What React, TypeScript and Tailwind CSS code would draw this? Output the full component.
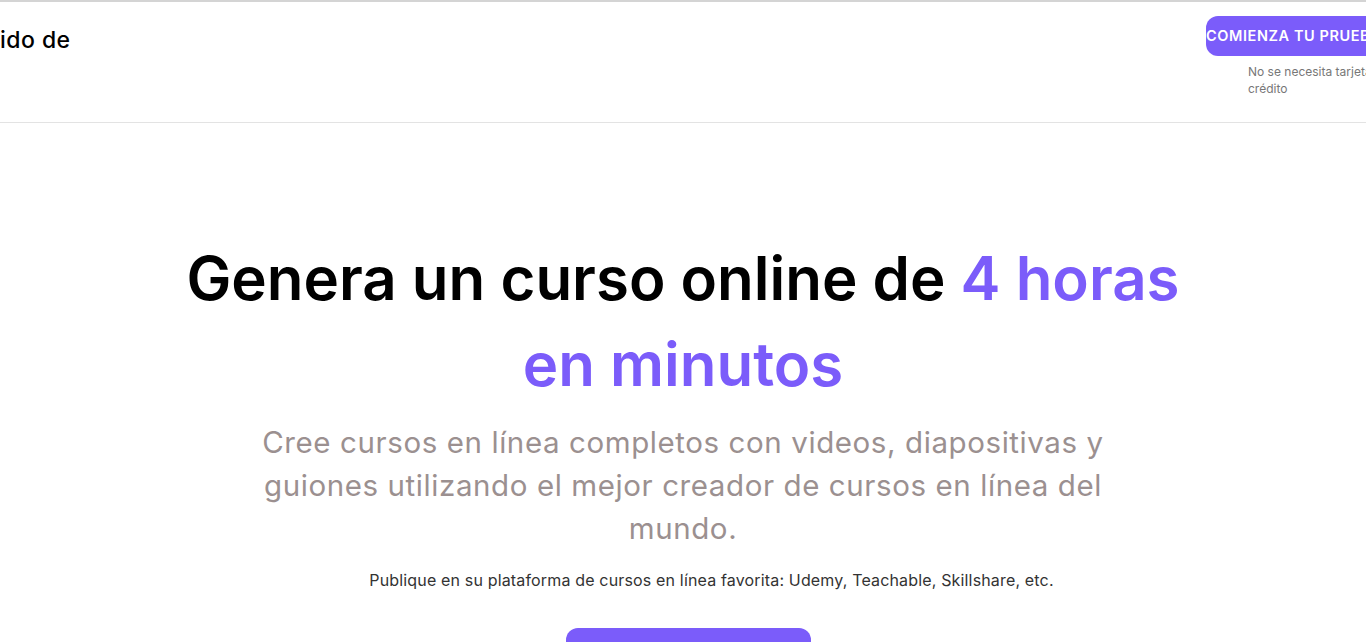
export default function App() {
  return (
    <div
      className="min-h-screen bg-white overflow-hidden"
      style={{ fontFamily: "Inter, 'Noto Sans', sans-serif" }}
    >
      {/* Header */}
      <header className="h-[123px] border-t-2 border-b border-t-[#d4d4d4] border-b-[#e3e3e3] flex justify-between overflow-hidden">
        <div className="pt-[21px] text-[23px] font-medium text-black tracking-[0.02em]">
          ido de
        </div>
        <div className="shrink-0 w-[200px] -mr-[40px] pt-[14px]">
          <a
            href="#"
            className="flex items-center h-[40px] rounded-xl bg-[#7b5cfa] text-white text-[14.5px] font-semibold tracking-[0.04em] whitespace-nowrap overflow-hidden"
          >
            COMIENZA TU PRUEBA GRATIS
          </a>
          <p className="pl-[42px] pt-[7px] text-[12px] leading-[17px] text-[#777]">
            No se necesita tarjeta de
            <br />
            crédito
          </p>
        </div>
      </header>

      {/* Hero */}
      <section className="flex flex-col items-center text-center pt-[112px]">
        <h1 className="text-[60px] leading-[86px] font-semibold text-black">
          Genera un curso online de <span className="text-[#7b5cfa]">4 horas</span>
          <br />
          <span className="text-[#7b5cfa]">en minutos</span>
        </h1>
        <p className="mt-[14px] max-w-[880px] text-[29.5px] leading-[43px] text-[#9b9090] tracking-[0.02em]">
          Cree cursos en línea completos con videos, diapositivas y guiones
          utilizando el mejor creador de cursos en línea del mundo.
        </p>
        <p className="mt-[18px] ml-[57px] text-[16px] text-[#333] tracking-[0.01em]">
          Publique en su plataforma de cursos en línea favorita: Udemy,
          Teachable, Skillshare, etc.
        </p>
        <a
          href="#"
          className="mt-[36px] ml-[10px] w-[245px] h-[56px] rounded-xl bg-[#7b5cfa]"
        />
      </section>
    </div>
  );
}
